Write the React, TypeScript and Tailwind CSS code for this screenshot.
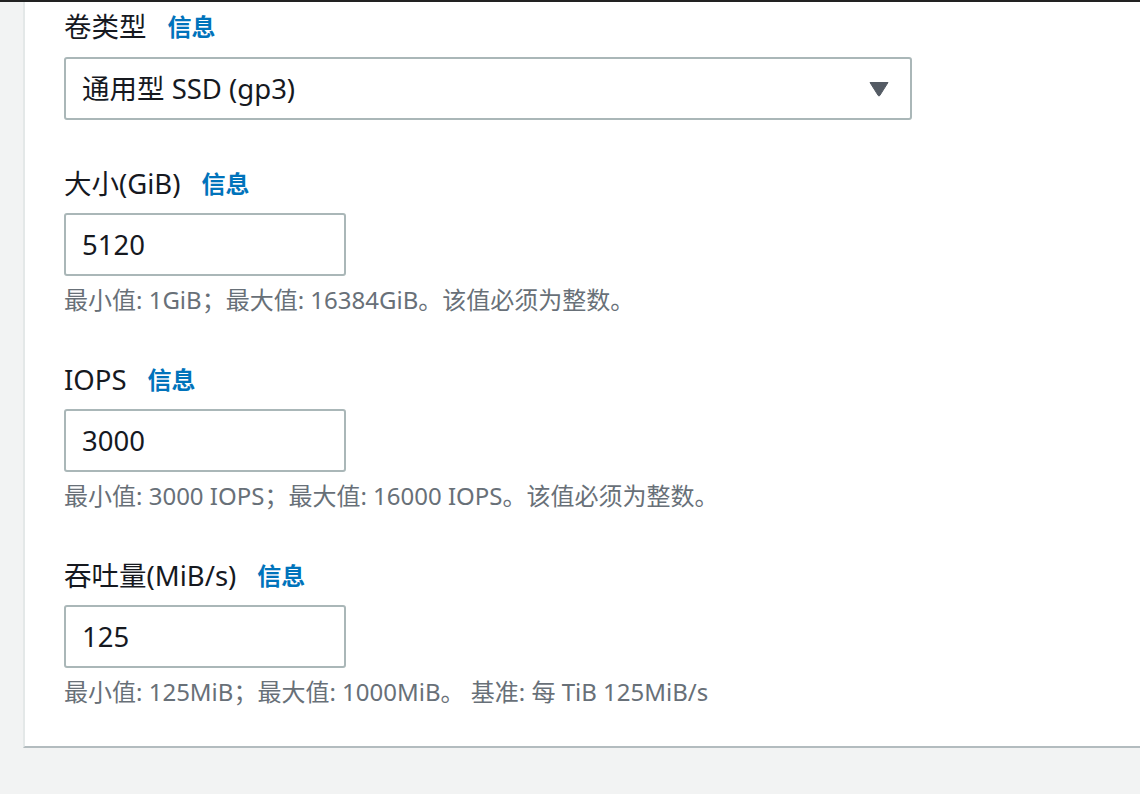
import React from 'react';

const font = { fontFamily: '"Noto Sans", "Noto Sans CJK SC", sans-serif' };

interface FieldProps {
  label: string;
  value: string;
  hint: string;
}

const InfoLink = () => (
  <a className="ml-[21px] font-bold text-[#0073bb] text-[24px]">信息</a>
);

const Field: React.FC<FieldProps> = ({ label, value, hint }) => (
  <div className="mt-[52px]">
    <div className="flex items-center h-[30px] text-[27.5px] text-[#16191f]">
      <span>{label}</span>
      <InfoLink />
    </div>
    <div className="mt-[14px] w-[282px] h-[63px] border-2 border-[#aab7b8] rounded-[3px] flex items-center px-[16px] text-[27.5px] text-[#16191f]">
      {value}
    </div>
    <div className="mt-[11px] h-[26px] flex items-center text-[24px] text-[#687078]">{hint}</div>
  </div>
);

export default function App() {
  return (
    <div style={font} className="w-[1140px] h-[794px] bg-[#f2f3f3] overflow-hidden border-t-2 border-[#222222]">
      <div className="ml-[23px] h-[746px] bg-white border-l-2 border-b-2 border-l-[#e4e8e8] border-b-[#b3bcbf] pl-[39px] pt-[10px]">
        <div className="flex items-center h-[30px] text-[27.5px] text-[#16191f]">
          <span>卷类型</span>
          <InfoLink />
        </div>
        <div className="mt-[15px] w-[848px] h-[63px] border-2 border-[#aab7b8] rounded-[3px] flex items-center justify-between pl-[16px] pr-[21px] text-[27.5px] text-[#16191f]">
          <span>通用型 SSD (gp3)</span>
          <svg width="20" height="16" viewBox="0 0 20 16">
            <path d="M1 1.5 H19 L10.8 14.5 Q10 15.6 9.2 14.5 Z" fill="#545b64" stroke="#545b64" strokeWidth="1" strokeLinejoin="round" />
          </svg>
        </div>
        <div className="-mt-[3px]">
          <Field label="大小(GiB)" value="5120" hint="最小值: 1GiB；最大值: 16384GiB。该值必须为整数。" />
        </div>
        <Field label="IOPS" value="3000" hint="最小值: 3000 IOPS；最大值: 16000 IOPS。该值必须为整数。" />
        <Field label="吞吐量(MiB/s)" value="125" hint="最小值: 125MiB；最大值: 1000MiB。 基准: 每 TiB 125MiB/s" />
      </div>
    </div>
  );
}
